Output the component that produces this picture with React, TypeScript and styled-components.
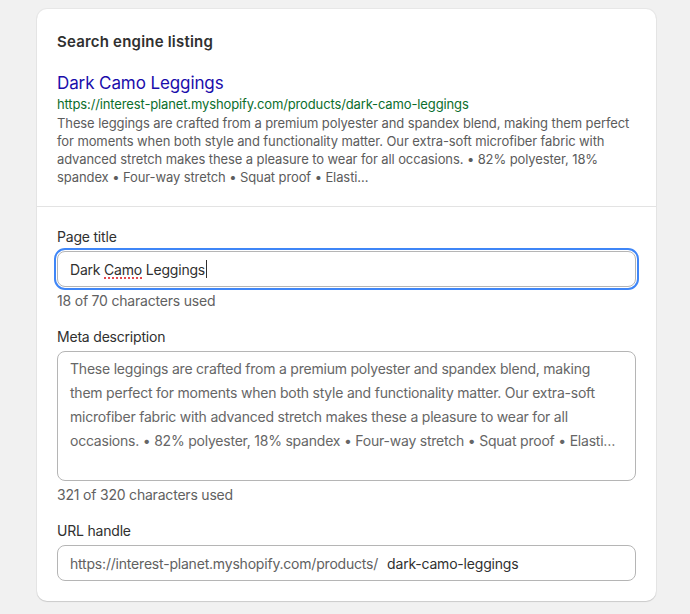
import React from "react";
import styled, { createGlobalStyle } from "styled-components";

const Global = createGlobalStyle`
  * { box-sizing: border-box; }
  html, body { margin: 0; padding: 0; background: #f1f1f1; }
  body {
    font-family: Inter, "Noto Sans", "Liberation Sans", sans-serif;
    color: #303030;
    -webkit-font-smoothing: antialiased;
  }
`;

const Page = styled.div`
  padding: 9px 34px 13px 37px;
`;

const Card = styled.section`
  background: #ffffff;
  border-radius: 10px;
  box-shadow: 0 0 0 1px rgba(0, 0, 0, 0.04), 0 1px 1px rgba(0, 0, 0, 0.12);
  overflow: hidden;
`;

const Section = styled.div<{ $top?: number }>`
  padding: ${(p) => p.$top ?? 20}px 20px 20px 20px;
  & + & {
    border-top: 1px solid #e3e3e3;
  }
`;

const Heading = styled.h2`
  margin: 0;
  font-size: 15px;
  line-height: 20px;
  font-weight: 600;
  letter-spacing: 0.2px;
  color: #303030;
`;

const Preview = styled.div`
  margin-top: 19px;
  display: flex;
  flex-direction: column;
  white-space: nowrap;
`;

const PreviewTitle = styled.div`
  font-size: 17px;
  line-height: 24px;
  letter-spacing: -0.1px;
  color: #1a0dab;
`;

const PreviewUrl = styled.div`
  font-size: 13px;
  line-height: 18px;
  letter-spacing: -0.13px;
  color: #0b6e2c;
`;

const PreviewDesc = styled.div`
  margin-top: 1px;
  font-size: 13px;
  line-height: 18px;
  letter-spacing: -0.1px;
  color: #5c5c5c;
`;

const Field = styled.div`
  display: flex;
  flex-direction: column;
  gap: 4px;
  & + & {
    margin-top: 16px;
  }
`;

const Label = styled.label`
  font-size: 14px;
  line-height: 20px;
  letter-spacing: -0.2px;
  color: #303030;
`;

const Help = styled.div`
  font-size: 14px;
  line-height: 20px;
  letter-spacing: -0.2px;
  color: #616161;
`;

const InputBox = styled.div<{ $focused?: boolean }>`
  height: 36px;
  display: flex;
  align-items: center;
  padding: 0 12px;
  border: 1px solid #b5b5b5;
  border-radius: 8px;
  font-size: 14px;
  letter-spacing: -0.2px;
  color: #303030;
  white-space: nowrap;
  overflow: hidden;
  outline: ${(p) => (p.$focused ? "2px solid #3f86f7" : "none")};
  outline-offset: 1px;
`;

const Misspelled = styled.span`
  text-decoration: underline dotted #e5484d;
  text-decoration-thickness: 2px;
  text-underline-offset: 3px;
`;

const Caret = styled.span`
  display: inline-block;
  width: 1px;
  height: 18px;
  background: #303030;
  margin-left: 1px;
`;

const TextArea = styled.div`
  height: 130px;
  padding: 5px 12px;
  border: 1px solid #b5b5b5;
  border-radius: 8px;
  font-size: 14px;
  line-height: 24px;
  letter-spacing: -0.22px;
  white-space: nowrap;
  overflow: hidden;
  color: #666666;
`;

const Prefix = styled.span`
  color: #616161;
`;

const Value = styled.span`
  margin-left: 9px;
  color: #303030;
`;

export default function App() {
  return (
    <>
      <Global />
      <Page>
        <Card>
          <Section $top={23}>
            <Heading>Search engine listing</Heading>
            <Preview>
              <PreviewTitle>Dark Camo Leggings</PreviewTitle>
              <PreviewUrl>https://interest-planet.myshopify.com/products/dark-camo-leggings</PreviewUrl>
              <PreviewDesc>
                These leggings are crafted from a premium polyester and spandex blend, making them perfect
                <br />
                for moments when both style and functionality matter. Our extra-soft microfiber fabric with
                <br />
                advanced stretch makes these a pleasure to wear for all occasions. • 82% polyester, 18%
                <br />
                spandex • Four-way stretch • Squat proof • Elasti…
              </PreviewDesc>
            </Preview>
          </Section>
          <Section>
            <Field>
              <Label>Page title</Label>
              <InputBox $focused>
                Dark&nbsp;<Misspelled>Camo</Misspelled>&nbsp;Leggings
                <Caret />
              </InputBox>
              <Help>18 of 70 characters used</Help>
            </Field>
            <Field>
              <Label>Meta description</Label>
              <TextArea>
                These leggings are crafted from a premium polyester and spandex blend, making
                <br />
                them perfect for moments when both style and functionality matter. Our extra-soft
                <br />
                microfiber fabric with advanced stretch makes these a pleasure to wear for all
                <br />
                occasions. • 82% polyester, 18% spandex • Four-way stretch • Squat proof • Elasti…
              </TextArea>
              <Help>321 of 320 characters used</Help>
            </Field>
            <Field>
              <Label>URL handle</Label>
              <InputBox>
                <Prefix>https://interest-planet.myshopify.com/products/</Prefix>
                <Value>dark-camo-leggings</Value>
              </InputBox>
            </Field>
          </Section>
        </Card>
      </Page>
    </>
  );
}
